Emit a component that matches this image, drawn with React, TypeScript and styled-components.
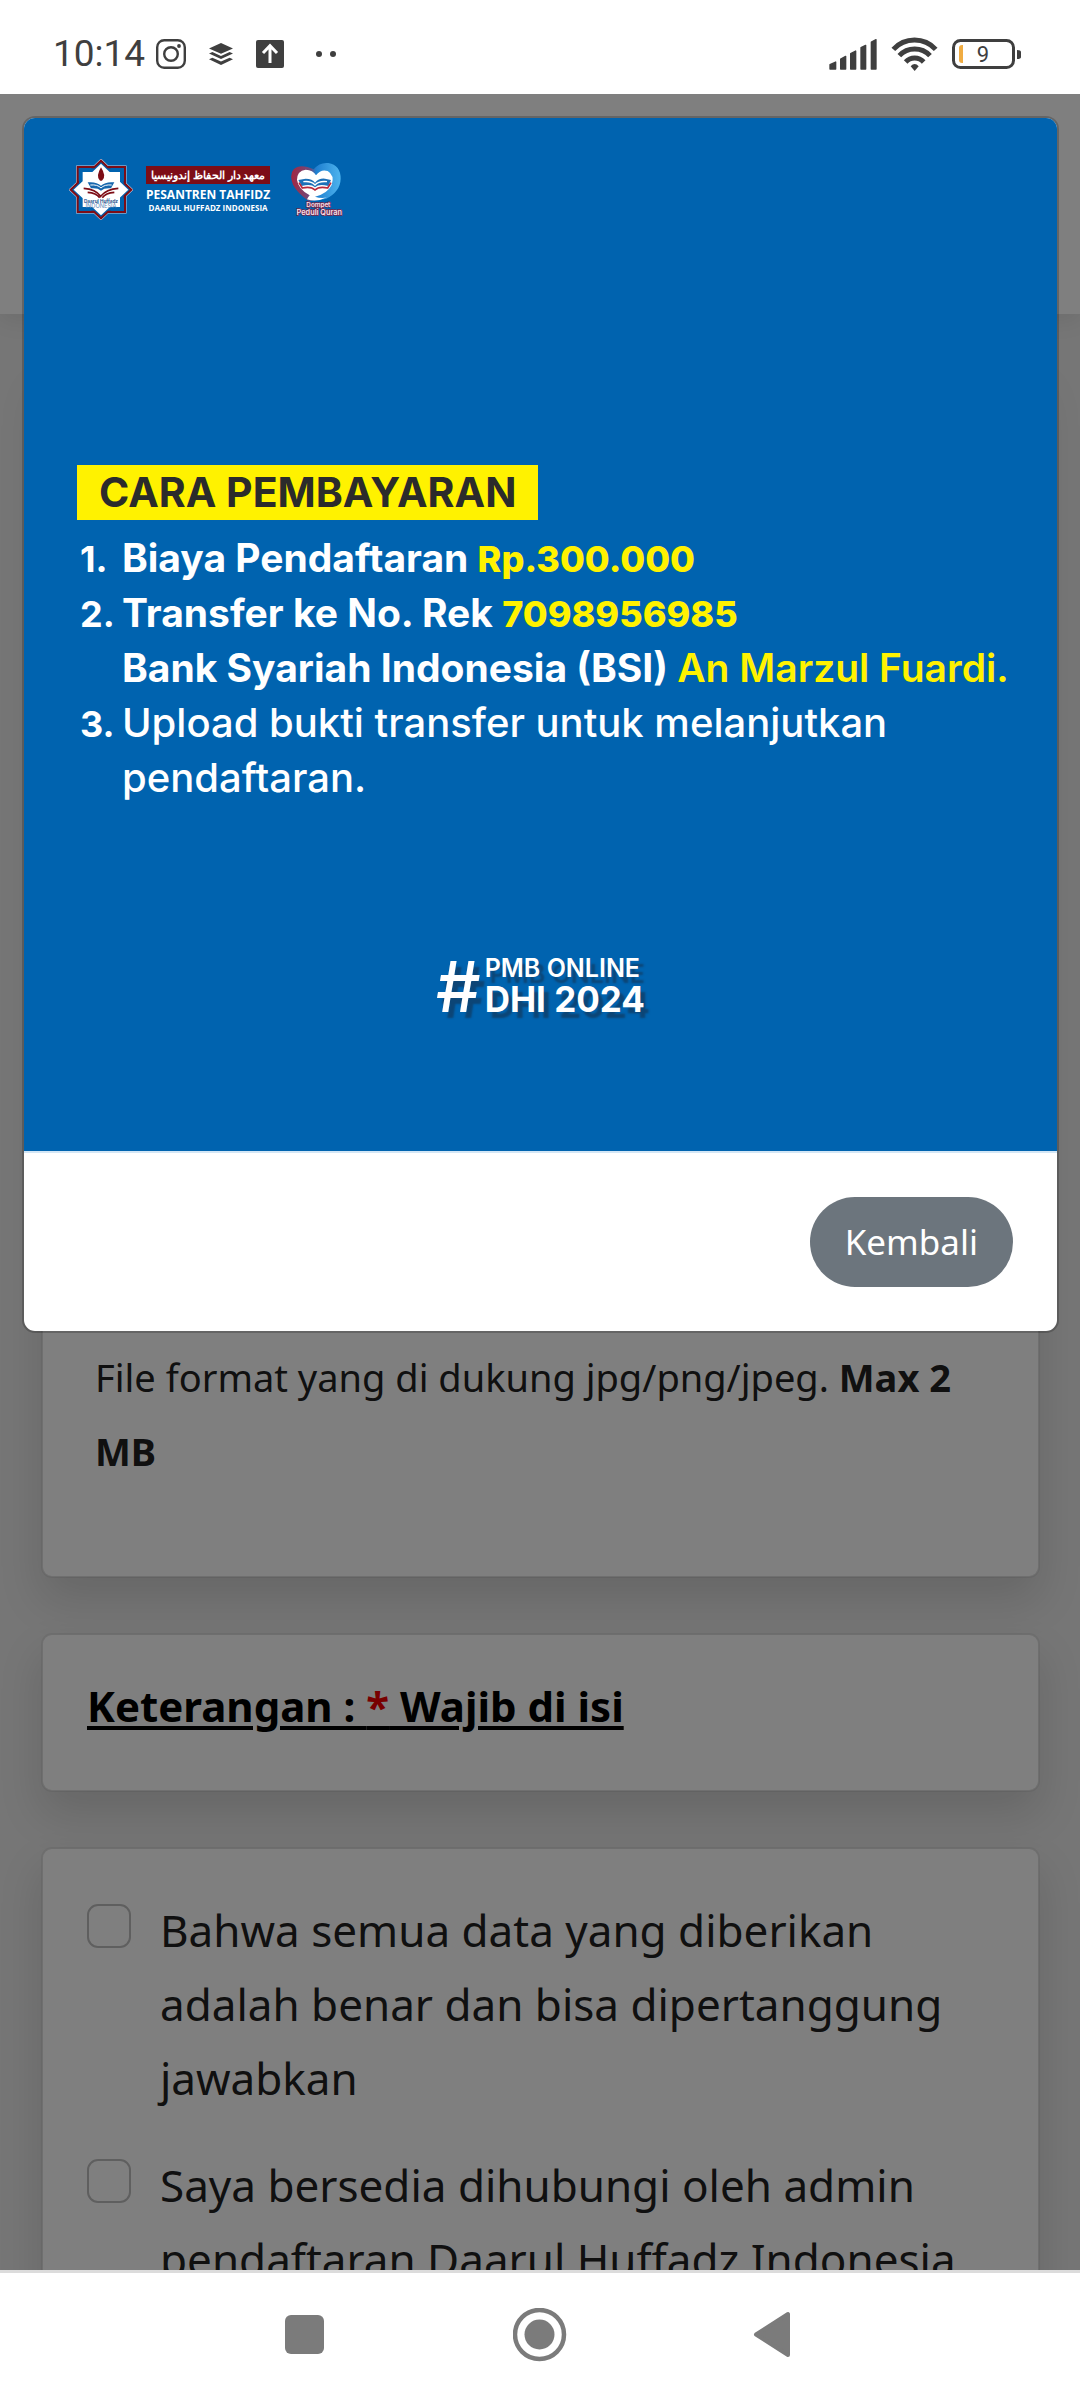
import React from 'react';
import styled, { createGlobalStyle } from 'styled-components';

const body = '"Noto Sans", "Open Sans", sans-serif';
const display = 'Inter, "Open Sans", sans-serif';
const ink = '#3f3f3f';
const blue = '#0063af';
const yellow = '#fff200';
const maroon = '#7d0d16';

const GlobalStyle = createGlobalStyle`
  *, *::before, *::after { box-sizing: border-box; }
  body { margin: 0; background: #fff; font-family: ${body}; }
`;

const Screen = styled.div`
  height: 100vh;
  display: flex;
  flex-direction: column;
  overflow: hidden;
`;

/* ---------- phone status bar ---------- */

const StatusBar = styled.header`
  flex: none;
  height: 94px;
  padding: 14px 58px 0 53px;
  display: flex;
  align-items: center;
  justify-content: space-between;
  background: #fff;
  color: ${ink};
`;

const StatusGroup = styled.div<{ $gap: number }>`
  display: flex;
  align-items: center;
  gap: ${(p) => p.$gap}px;
`;

const Clock = styled.time`
  font: 400 37px/44px Roboto, sans-serif;
  margin-right: -12px;
`;

const Glyph = styled.svg`
  display: block;
  flex: none;
`;

/* ---------- page behind the dialog ---------- */

const Viewport = styled.div`
  position: relative;
  flex: 1;
  min-height: 0;
  overflow: hidden;
  background: #ececec;
`;

const PageHeader = styled.div`
  height: 220px;
  background: #fff;
  box-shadow: 0 6px 22px rgba(0, 0, 0, 0.08);
`;

const Main = styled.main`
  padding: 56px 40px 56px 41px;
  display: flex;
  flex-direction: column;
  gap: 55px;
`;

const Card = styled.section<{ $minHeight?: number }>`
  min-height: ${(p) => p.$minHeight ?? 0}px;
  padding: 44px;
  display: flex;
  flex-direction: column;
  justify-content: flex-end;
  background: #fff;
  background-clip: padding-box;
  border: 2px solid rgba(0, 0, 0, 0.06);
  border-radius: 11px;
  box-shadow: 0 22px 44px rgba(0, 0, 0, 0.13);
`;

const UploadHint = styled.p`
  margin: 0;
  padding: 0 8px 44px;
  font-size: 38px;
  line-height: 74px;
  color: #212121;
`;

const Legend = styled.h2`
  margin: 0 0 14px;
  font-size: 42px;
  line-height: 53px;
  font-weight: 700;
  color: #000;
  text-decoration: underline;
  text-decoration-thickness: 4px;
  text-underline-offset: 4px;
`;

const Required = styled.span`
  color: #f00000;
`;

const Checks = styled.div`
  display: flex;
  flex-direction: column;
  gap: 33px;
`;

const CheckRow = styled.label`
  display: flex;
  align-items: flex-start;
  gap: 29px;
  font-size: 44px;
  line-height: 74px;
  color: #212121;
`;

const CheckBox = styled.input`
  appearance: none;
  flex: none;
  width: 44px;
  height: 44px;
  margin: 11px 0 0;
  background: #fff;
  border: 2px solid #bfbfbf;
  border-radius: 11px;
`;

/* ---------- dialog ---------- */

const Backdrop = styled.div`
  position: absolute;
  inset: 0;
  padding: 22px 21px 22px 22px;
  background: rgba(0, 0, 0, 0.5);
`;

const Dialog = styled.div`
  overflow: hidden;
  background: #fff;
  background-clip: padding-box;
  border: 2px solid rgba(0, 0, 0, 0.2);
  border-radius: 13px;
`;

const Poster = styled.div`
  aspect-ratio: 1;
  display: flex;
  flex-direction: column;
  align-items: flex-start;
  padding-top: 41px;
  background: ${blue};
  color: #fff;
  font-family: ${display};
`;

const Logos = styled.div`
  display: flex;
  align-items: center;
  padding-left: 45px;
  margin-bottom: 245px;
`;

const School = styled.div`
  display: flex;
  flex-direction: column;
  margin: 0 20px 0 13px;
  font-family: "Open Sans", sans-serif;
  font-weight: 700;
  text-align: center;
  white-space: nowrap;
`;

const SchoolArabic = styled.span`
  background: ${maroon};
  font-size: 11px;
  line-height: 18px;
  margin-bottom: 4px;
`;

const SchoolName = styled.span`
  font-size: 12px;
  line-height: 14px;
`;

const SchoolSub = styled.span`
  font-size: 8px;
  line-height: 11px;
`;

const Badge = styled.h1`
  margin: 0 0 10px 53px;
  padding: 0 22px;
  background: ${yellow};
  color: #2b2b2b;
  font-size: 41px;
  line-height: 55px;
  font-weight: 700;
`;

const Steps = styled.ol`
  margin: 0 0 151px;
  padding: 0 0 0 56px;
  list-style: none;
  font-size: 39px;
  line-height: 55px;
  white-space: nowrap;
`;

const Step = styled.li<{ $weight: number }>`
  display: flex;
  align-items: baseline;
  font-size: ${(p) => (p.$weight < 600 ? 40 : 39)}px;
  font-weight: ${(p) => p.$weight};
`;

const StepNumber = styled.span`
  flex: none;
  width: 42px;
  font-size: 36px;
  line-height: 36px;
  font-weight: 700;
`;

const Figure = styled.strong`
  font-size: 36px;
  line-height: 36px;
  font-weight: 800;
  color: ${yellow};
`;

const Payee = styled.span`
  font-weight: 600;
  color: ${yellow};
`;

const Hashtag = styled.div`
  align-self: center;
  display: flex;
  align-items: center;
  gap: 4px;
  text-shadow: 5px 6px 2px rgba(20, 50, 80, 0.6);
`;

const HashSign = styled.span`
  font-size: 70px;
  line-height: 60px;
  font-weight: 500;
`;

const HashLines = styled.div`
  display: flex;
  flex-direction: column;
`;

const HashTop = styled.span`
  font-size: 25px;
  line-height: 25px;
  font-weight: 600;
`;

const HashBottom = styled.span`
  font-size: 35px;
  line-height: 36px;
  font-weight: 700;
`;

const DialogFooter = styled.div`
  display: flex;
  justify-content: flex-end;
  padding: 44px;
  border-top: 2px solid #d3e6f5;
`;

const BackButton = styled.button`
  padding: 0 35px;
  border: 0;
  border-radius: 45px;
  background: #6c757d;
  color: #fff;
  font-family: ${body};
  font-size: 35px;
  line-height: 90px;
`;

/* ---------- phone navigation bar ---------- */

const NavBar = styled.nav`
  flex: none;
  height: 130px;
  padding-bottom: 3px;
  display: flex;
  align-items: center;
  justify-content: center;
  gap: 180px;
  background: #fff;
  border-top: 3px solid #dcdcdc;
`;

const NavButton = styled.button`
  padding: 0;
  border: 0;
  background: none;
`;

/* ---------- drawings ---------- */

const Instagram = () => (
  <Glyph width="30" height="30" viewBox="0 0 30 30" fill="none" stroke={ink} strokeWidth="2.4">
    <rect x="1.2" y="1.2" width="27.6" height="27.6" rx="7" />
    <circle cx="15" cy="15" r="6.8" />
    <circle cx="23" cy="7" r="1.9" fill={ink} stroke="none" />
  </Glyph>
);

const Layers = () => (
  <Glyph width="24" height="22" viewBox="0 0 24 22" fill={ink}>
    <path d="M12 0 24 5.4 12 10.8 0 5.4Z" />
    <path d="M0 10.4 3.4 9 12 12.9 20.6 9 24 10.4 12 16Z" />
    <path d="M0 16.2 3.4 14.8 12 18.6 20.6 14.8 24 16.2 12 22Z" />
  </Glyph>
);

const UploadBox = () => (
  <Glyph width="28" height="28" viewBox="0 0 28 28">
    <rect width="28" height="28" rx="2" fill={ink} />
    <path d="M14 23V6M7 13l7-7.400 7 7.400" fill="none" stroke="#fff" strokeWidth="3" />
  </Glyph>
);

const Dots = () => (
  <Glyph width="36" height="8" viewBox="0 0 36 8" fill={ink}>
    <circle cx="12" cy="4" r="3" />
    <circle cx="26" cy="4" r="3" />
  </Glyph>
);

const Signal = () => (
  <Glyph width="48" height="31" viewBox="150 118 144 93" fill={ink} stroke={ink} strokeWidth="4" strokeLinejoin="round">
    <path d="M153 195 170 187V208H153Z" />
    <path d="M185 178 200 170V208H185Z" />
    <path d="M215 162 230 154V208H215Z" />
    <path d="M246 144 260 137V208H246Z" />
    <path d="M277 127 291 120V208H277Z" />
  </Glyph>
);

const Wifi = () => (
  <Glyph width="47" height="34" viewBox="331 111 141 102" fill="none" stroke={ink} strokeWidth="15">
    <path d="M338 148A86 86 0 0 1 465 148" />
    <path d="M356 167A63 63 0 0 1 448 167" />
    <path d="M375 186A37 37 0 0 1 429 186" />
    <path d="M390 199Q402 185 414 199L402 213Z" fill={ink} stroke="none" />
  </Glyph>
);

const Battery = () => (
  <Glyph width="70" height="30" viewBox="0 0 70 30">
    <rect x="1.500" y="1.500" width="60" height="27" rx="7" fill="none" stroke={ink} strokeWidth="3" />
    <path d="M65 11q4 0 4 2v5q0 2-4 2Z" fill={ink} />
    <path d="M11 6v18h-1q-3 0-3-3V9q0-3 3-3Z" fill="#f0ac42" />
    <text x="31" y="23" textAnchor="middle" fontFamily="Roboto, sans-serif" fontSize="22" fill={ink}>9</text>
  </Glyph>
);

const StarLogo = () => (
  <Glyph width="64" height="61" viewBox="206 478 192 183">
    <g fill="none" stroke="#c9d4e6" strokeWidth="9">
      <path d="M232 502H374V637H232ZM302 483 393 570 302 656 211 570Z" />
    </g>
    <g fill={blue} stroke={maroon} strokeWidth="6">
      <rect x="232" y="502" width="142" height="135" />
      <path d="M302 483 393 570 302 656 211 570Z" />
    </g>
    <rect x="236" y="506" width="134" height="127" fill={blue} />
    <path d="M247 517H359V622H247Z M302 492 384 570 302 647 220 570Z" fill="#fff" />
    <path d="M302 503Q286 530 298 542Q302 545 306 542Q319 530 302 503Z" fill={maroon} />
    <path d="M262 548Q288 545 302 558Q316 545 342 548L332 566Q312 564 302 573Q292 564 272 566Z" fill="#1767ad" />
    <path d="M270 556Q292 554 302 565Q312 554 334 556" fill="none" stroke="#fff" strokeWidth="3" />
    <path d="M250 566Q286 568 301 590Q318 568 354 566M262 578Q288 580 298 594M342 578Q316 580 306 594" fill="none" stroke={maroon} strokeWidth="5" />
    <text x="302" y="609" textAnchor="middle" fontFamily={display} fontWeight="700" fontSize="14" fill="#1c4f8c">Daarul Huffadz</text>
    <text x="302" y="624" textAnchor="middle" fontFamily={display} fontSize="17" fill="#5d87b4">INDONESIA</text>
  </Glyph>
);

const HeartLogo = () => (
  <Glyph width="54" height="56" viewBox="697 30 162 168">
    <defs>
      <linearGradient id="ring" x1="0" x2="1">
        <stop offset="0" stopColor="#a52640" />
        <stop offset="0.4" stopColor="#6a4d80" />
        <stop offset="0.5" stopColor="#1f7fd0" />
        <stop offset="1" stopColor="#4db4ee" />
      </linearGradient>
    </defs>
    <path d="M768 52Q786 30 812 33Q849 40 849 80Q848 118 806 140Q780 148 752 146Q720 124 706 98Q694 68 708 52Q728 34 768 52Z" fill="url(#ring)" />
    <path d="M775 70Q790 50 810 57Q832 70 822 99Q808 126 772 134Q792 141 808 136Q776 152 748 142Q752 134 756 130Q722 112 718 84Q718 56 744 53Q766 54 775 70Z" fill="#fff" />
    <path d="M722 84 744 80Q764 80 772 92Q784 78 802 80L820 84 812 102Q784 94 772 106Q760 94 732 102Z" fill="#1c70b8" />
    <path d="M737 89Q760 86 772 99Q784 86 808 89" fill="none" stroke="#fff" strokeWidth="4" />
    <path d="M724 92 734 108Q760 102 772 114Q784 102 810 108L820 92" fill="none" stroke="#b8283c" strokeWidth="5" />
    <g fontFamily={display} fontWeight="600" textAnchor="middle" fill="#f4e4ee" stroke="#7a2346" strokeWidth="4" paintOrder="stroke">
      <text x="782" y="165" fontSize="19">Dompet</text>
      <text x="785" y="189" fontSize="22">Peduli Quran</text>
    </g>
  </Glyph>
);

const RecentIcon = () => (
  <Glyph width="54" height="54" viewBox="0 0 54 54">
    <rect x="6" y="7" width="39" height="39" rx="6" fill="#7b7b7b" />
  </Glyph>
);

const HomeIcon = () => (
  <Glyph width="54" height="54" viewBox="0 0 54 54">
    <circle cx="26.500" cy="26.500" r="24.500" fill="none" stroke="#7b7b7b" strokeWidth="4.500" />
    <circle cx="26.500" cy="26.500" r="15" fill="#7b7b7b" />
  </Glyph>
);

const BackIcon = () => (
  <Glyph width="54" height="54" viewBox="0 0 54 54">
    <path d="M9 26.500 41 6V47Z" fill="#7b7b7b" stroke="#7b7b7b" strokeWidth="4" strokeLinejoin="round" />
  </Glyph>
);

const statements = [
  'Bahwa semua data yang diberikan adalah benar dan bisa dipertanggung jawabkan',
  'Saya bersedia dihubungi oleh admin pendaftaran Daarul Huffadz Indonesia',
];

export default function App() {
  return (
    <Screen>
      <GlobalStyle />
      <StatusBar>
        <StatusGroup $gap={23}>
          <Clock>10:14</Clock>
          <Instagram />
          <Layers />
          <UploadBox />
          <Dots />
        </StatusGroup>
        <StatusGroup $gap={14}>
          <Signal />
          <Wifi />
          <Battery />
        </StatusGroup>
      </StatusBar>

      <Viewport>
        <PageHeader />
        <Main>
          <Card $minHeight={1208}>
            <UploadHint>
              File format yang di dukung jpg/png/jpeg. <b>Max 2 MB</b>
            </UploadHint>
          </Card>
          <Card>
            <Legend>
              Keterangan : <Required>*</Required> Wajib di isi
            </Legend>
          </Card>
          <Card>
            <Checks>
              {statements.map((text) => (
                <CheckRow key={text}>
                  <CheckBox type="checkbox" />
                  <span>{text}</span>
                </CheckRow>
              ))}
            </Checks>
          </Card>
        </Main>

        <Backdrop>
          <Dialog role="dialog" aria-modal="true" aria-labelledby="payment-title">
            <Poster>
              <Logos>
                <StarLogo />
                <School>
                  <SchoolArabic lang="ar" dir="rtl">معهد دار الحفاظ إندونيسيا</SchoolArabic>
                  <SchoolName>PESANTREN TAHFIDZ</SchoolName>
                  <SchoolSub>DAARUL HUFFADZ INDONESIA</SchoolSub>
                </School>
                <HeartLogo />
              </Logos>
              <Badge id="payment-title">CARA PEMBAYARAN</Badge>
              <Steps>
                <Step $weight={700}>
                  <StepNumber>1.</StepNumber>
                  <span>Biaya Pendaftaran <Figure>Rp.300.000</Figure></span>
                </Step>
                <Step $weight={700}>
                  <StepNumber>2.</StepNumber>
                  <span>
                    Transfer ke No. Rek <Figure>7098956985</Figure>
                    <br />
                    Bank Syariah Indonesia (BSI) <Payee>An Marzul Fuardi.</Payee>
                  </span>
                </Step>
                <Step $weight={500}>
                  <StepNumber>3.</StepNumber>
                  <span>
                    Upload bukti transfer untuk melanjutkan
                    <br />
                    pendaftaran.
                  </span>
                </Step>
              </Steps>
              <Hashtag>
                <HashSign>#</HashSign>
                <HashLines>
                  <HashTop>PMB ONLINE</HashTop>
                  <HashBottom>DHI 2024</HashBottom>
                </HashLines>
              </Hashtag>
            </Poster>
            <DialogFooter>
              <BackButton type="button">Kembali</BackButton>
            </DialogFooter>
          </Dialog>
        </Backdrop>
      </Viewport>

      <NavBar aria-label="Navigasi sistem">
        <NavButton type="button" aria-label="Aplikasi terbaru"><RecentIcon /></NavButton>
        <NavButton type="button" aria-label="Beranda"><HomeIcon /></NavButton>
        <NavButton type="button" aria-label="Kembali ke layar sebelumnya"><BackIcon /></NavButton>
      </NavBar>
    </Screen>
  );
}
